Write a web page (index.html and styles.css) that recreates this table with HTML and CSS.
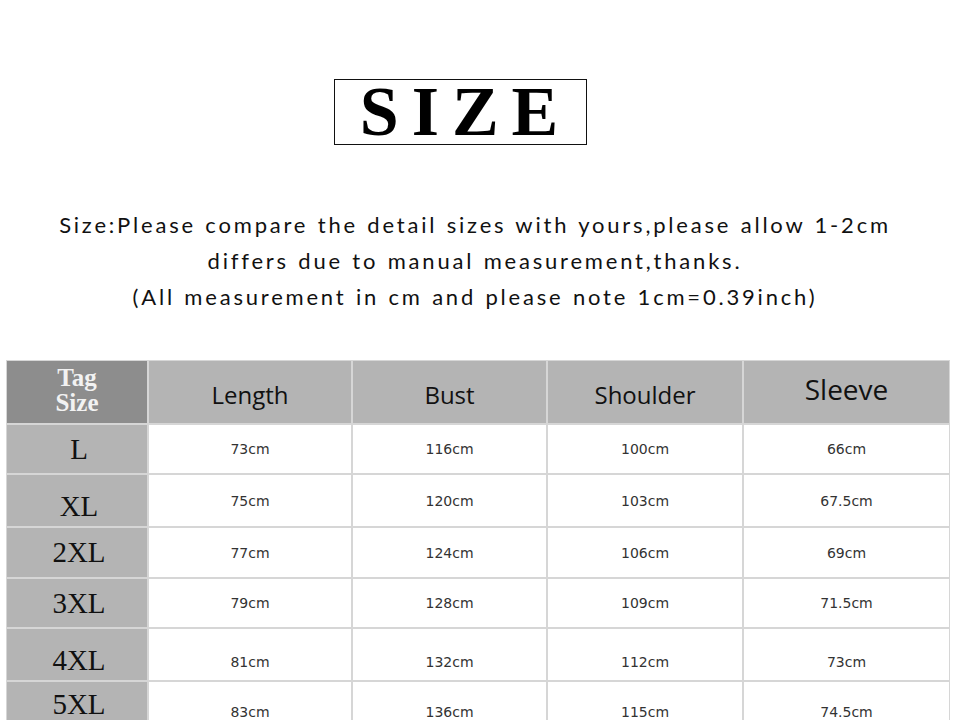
FILE: index.html
```html
<!DOCTYPE html>
<html>
<head>
<meta charset="utf-8">
<link rel="stylesheet" href="styles.css">
</head>
<body>
<div class="page">
  <div class="title-wrap">
    <div class="title-box"><span class="title">SIZE</span></div>
  </div>
  <div class="note">
    <p>Size:Please compare the detail sizes with yours,please allow 1-2cm</p>
    <p>differs due to manual measurement,thanks.</p>
    <p>(All measurement in cm and please note 1cm=0.39inch)</p>
  </div>
  <div class="table">
    <div class="cell tag"><span>Tag</span><span>Size</span></div>
    <div class="cell head">Length</div>
    <div class="cell head">Bust</div>
    <div class="cell head">Shoulder</div>
    <div class="cell head big">Sleeve</div>

    <div class="cell size">L</div>
    <div class="cell val">73cm</div>
    <div class="cell val">116cm</div>
    <div class="cell val">100cm</div>
    <div class="cell val">66cm</div>

    <div class="cell size low">XL</div>
    <div class="cell val">75cm</div>
    <div class="cell val">120cm</div>
    <div class="cell val">103cm</div>
    <div class="cell val">67.5cm</div>

    <div class="cell size">2XL</div>
    <div class="cell val">77cm</div>
    <div class="cell val">124cm</div>
    <div class="cell val">106cm</div>
    <div class="cell val">69cm</div>

    <div class="cell size">3XL</div>
    <div class="cell val">79cm</div>
    <div class="cell val">128cm</div>
    <div class="cell val">109cm</div>
    <div class="cell val">71.5cm</div>

    <div class="cell size low">4XL</div>
    <div class="cell val low">81cm</div>
    <div class="cell val low">132cm</div>
    <div class="cell val low">112cm</div>
    <div class="cell val low">73cm</div>

    <div class="cell size top">5XL</div>
    <div class="cell val top">83cm</div>
    <div class="cell val top">136cm</div>
    <div class="cell val top">115cm</div>
    <div class="cell val top">74.5cm</div>
  </div>
</div>
</body>
</html>
```
FILE: styles.css
```css
html, body {
  margin: 0;
  padding: 0;
  background: #fff;
  overflow: hidden;
}
.page {
  width: 960px;
  height: 720px;
  overflow: hidden;
}
.title-wrap {
  padding-top: 79px;
  padding-left: 334px;
}
.title-box {
  width: 251px;
  height: 64px;
  border: 1px solid #111;
  display: flex;
  align-items: center;
  justify-content: center;
}
.title {
  font-family: "Liberation Serif", serif;
  font-weight: bold;
  font-size: 70px;
  letter-spacing: 13px;
  margin-left: 10px;
  line-height: 1;
  color: #000;
  margin-top: 0;
}
.note {
  margin-top: 62px;
  padding-right: 10px;
  text-align: center;
  font-family: "Lato", "Liberation Sans", sans-serif;
  font-size: 22px;
  letter-spacing: 2.8px;
  word-spacing: 1px;
  color: #111;
}
.note p {
  margin: 0;
  line-height: 36px;
  white-space: nowrap;
}
.table {
  margin-top: 45px;
  margin-left: 6px;
  width: max-content;
  display: grid;
  grid-template-columns: 140px 202px 193px 194px 205px;
  grid-template-rows: 62px 48px 51px 49px 48px 51px 50px;
  background: #d6d6d6;
  gap: 2px;
  padding: 1px;
}
.cell {
  display: flex;
  align-items: center;
  justify-content: center;
  background: #fff;
}
.head {
  background: #b4b4b4;
  font-family: "Open Sans", "DejaVu Sans", sans-serif;
  font-size: 24px;
  color: #111;
  padding-top: 4px;
}
.head.big {
  font-size: 28px;
  padding-top: 0;
  padding-bottom: 6px;
}
.tag {
  background: #8d8d8d;
  flex-direction: column;
  font-family: "Liberation Serif", serif;
  font-weight: bold;
  font-size: 25px;
  line-height: 25px;
  color: #f2f2f2;
  padding-bottom: 4px;
}
.size {
  background: #b4b4b4;
  font-family: "Liberation Serif", serif;
  font-size: 29px;
  color: #111;
  padding-left: 4px;
}
.size.low {
  padding-top: 12px;
}
.val {
  font-family: "DejaVu Sans", sans-serif;
  font-size: 14px;
  color: #333;
}
.val.low {
  padding-top: 14px;
}
.top {
  align-items: flex-start;
}
.size.top {
  padding-top: 6px;
}
.val.top {
  padding-top: 22px;
}
```
